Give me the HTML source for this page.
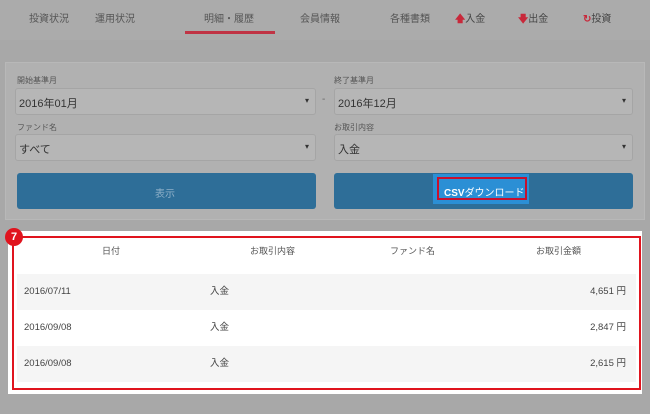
<!DOCTYPE html><html><head><meta charset="utf-8"><style>
*{margin:0;padding:0;box-sizing:border-box}
body{width:650px;height:414px;background:#a8a8a8;font-family:"Liberation Sans","Noto Sans CJK JP",sans-serif;position:relative;overflow:hidden;color:#444}
.a{position:absolute}
.nav{left:0;top:0;width:650px;height:40px;background:#ababab;font-size:10px;color:#555}
.nav span{position:absolute;top:10px}
.panel{left:5px;top:62px;width:640px;height:158px;background:#b1b1b1;border:1px solid #b8b8b8}
.lbl{font-size:8px;color:#555}
.sel{background:#b6b6b6;border:1px solid #a5a5a5;border-radius:3px;height:27px;font-size:11px;color:#333;padding:6px 3px}
.sel:after{content:"▾";position:absolute;right:6px;top:7px;font-size:8px;color:#333}
.btn{background:#2e6e98;border-radius:3px;height:36px}
.row{left:17px;width:619px;height:36px;font-size:9.5px;color:#444}
.row span{position:absolute;top:0;line-height:36px}
</style></head><body>
<div class="a nav">
<span style="left:29px">投資状況</span>
<span style="left:95px">運用状況</span>
<span style="left:204px">明細・履歴</span>
<span style="left:300px">会員情報</span>
<span style="left:390px">各種書類</span>
<span style="left:455px;color:#444"><b style="color:#c8283a">🡅</b>入金</span>
<span style="left:518px;color:#444"><b style="color:#c8283a">🡇</b>出金</span>
<span style="left:583px;color:#444"><b style="color:#c8283a">↻</b>投資</span>
</div>
<div class="a" style="left:185px;top:31px;width:90px;height:3px;background:#c03445"></div>
<div class="a panel"></div>
<div class="a lbl" style="left:17px;top:75px">開始基準月</div>
<div class="a lbl" style="left:334px;top:75px">終了基準月</div>
<div class="a sel" style="left:15px;top:88px;width:301px">2016年01月</div>
<div class="a" style="left:322px;top:94px;font-size:10px;color:#666">-</div>
<div class="a sel" style="left:334px;top:88px;width:299px">2016年12月</div>
<div class="a lbl" style="left:17px;top:122px">ファンド名</div>
<div class="a lbl" style="left:334px;top:122px">お取引内容</div>
<div class="a sel" style="left:15px;top:134px;width:301px">すべて</div>
<div class="a sel" style="left:334px;top:134px;width:299px">入金</div>
<div class="a btn" style="left:17px;top:173px;width:299px"><span class="a" style="left:138px;top:12px;font-size:10px;color:#8fb0c8">表示</span></div>
<div class="a btn" style="left:334px;top:173px;width:299px"></div>
<div class="a" style="left:433px;top:174px;width:96px;height:30px;background:#2b8fd5"></div>
<div class="a" style="left:437px;top:177px;width:90px;height:23px;border:2px solid #c8102e;color:#fff;font-size:10px;padding:5px 0 0 5px"><b>CSV</b>ダウンロード</div>
<div class="a" style="left:8px;top:231px;width:634px;height:163px;background:#fff"></div>
<div class="a row" style="top:274px;background:#f5f5f5"></div>
<div class="a row" style="top:346px;background:#f5f5f5"></div>
<div class="a" style="left:12px;top:236px;width:629px;height:154px;border:2px solid #e0141e"></div>
<div class="a" style="left:5px;top:228px;width:18px;height:18px;border-radius:50%;background:#e0141e;color:#fff;font-size:11px;font-weight:bold;text-align:center;line-height:18px">7</div>
<div class="a" style="left:0;top:244px;width:650px;font-size:9px;color:#555">
<span class="a" style="left:102px">日付</span><span class="a" style="left:250px">お取引内容</span><span class="a" style="left:390px">ファンド名</span><span class="a" style="left:536px">お取引金額</span></div>
<div class="a row" style="top:274px"><span style="left:7px">2016/07/11</span><span style="left:193px">入金</span><span style="right:10px">4,651 円</span></div>
<div class="a row" style="top:310px"><span style="left:7px">2016/09/08</span><span style="left:193px">入金</span><span style="right:10px">2,847 円</span></div>
<div class="a row" style="top:346px"><span style="left:7px">2016/09/08</span><span style="left:193px">入金</span><span style="right:10px">2,615 円</span></div>
</body></html>
